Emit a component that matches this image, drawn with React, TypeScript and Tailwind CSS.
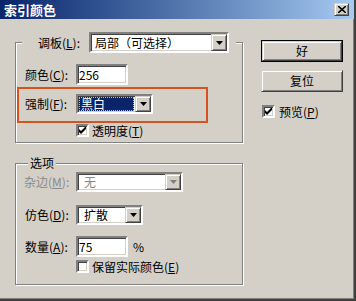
import React from "react";

const FONT = { fontFamily: '"Noto Sans CJK SC", "Noto Sans", sans-serif' };

const sunken =
  "border-2 border-t-[#808080] border-l-[#808080] border-b-white border-r-white shadow-[inset_1px_1px_0_#404040,inset_-1px_-1px_0_#d4d0c8]";
const raised =
  "border border-t-[#d4d0c8] border-l-[#d4d0c8] border-b-[#404040] border-r-[#404040] shadow-[inset_1px_1px_0_#fff,inset_-1px_-1px_0_#808080]";

function Key({ label, k, disabled }: { label: string; k: string; disabled?: boolean }) {
  return (
    <span className={disabled ? "text-[#8a8a8a]" : "text-black"}>
      {label}(<span className="underline underline-offset-1">{k}</span>):
    </span>
  );
}

function Arrow({ disabled }: { disabled?: boolean }) {
  return (
    <div className={`${raised} bg-[#d4d0c8] w-[16px] h-full flex items-center justify-center shrink-0`}>
      <svg width="7" height="4" viewBox="0 0 7 4">
        <path d="M0 0 H7 L3.5 4 Z" fill={disabled ? "#808080" : "#000"} />
      </svg>
    </div>
  );
}

function Select({
  text,
  w,
  h = 20,
  disabled,
  selected,
  pl = "pl-[4px]",
}: {
  text: string;
  w: string;
  h?: number;
  disabled?: boolean;
  selected?: boolean;
  pl?: string;
}) {
  return (
    <div className={`${sunken} ${w} bg-white flex`} style={{ height: h }}>
      {selected ? (
        <div className="flex-1 p-[1px]">
          <div className="h-full bg-[#0a246a] outline-1 outline-dotted outline-[#c9c08a] -outline-offset-1 flex items-center pl-[2px] text-white leading-none">
            {text}
          </div>
        </div>
      ) : (
        <div className={`flex-1 flex items-center ${pl} leading-none ${disabled ? "text-[#8a8a8a]" : "text-black"}`}>
          {text}
        </div>
      )}
      <Arrow disabled={disabled} />
    </div>
  );
}

function Input({ value, w }: { value: string; w: string }) {
  return (
    <div className={`${sunken} ${w} h-[21px] bg-white flex items-center pl-[1px] leading-none`}>{value}</div>
  );
}

function Check({ checked }: { checked?: boolean }) {
  return (
    <div className={`${sunken} w-[13px] h-[13px] bg-white flex items-center justify-center shrink-0`}>
      {checked && (
        <svg width="7" height="7" viewBox="0 0 7 7">
          <path d="M0 2 L2 4 L7 -1 V2 L2 7 L0 5 Z" fill="#000" />
        </svg>
      )}
    </div>
  );
}

function Button({ label, isDefault }: { label: string; isDefault?: boolean }) {
  return (
    <div className={`h-[22px] w-[82px] ${isDefault ? "border border-black" : ""}`}>
      <div className={`${raised} bg-[#d4d0c8] h-full flex items-center justify-center leading-none`}>{label}</div>
    </div>
  );
}

export default function App() {
  return (
    <div
      className="w-[356px] h-[301px] bg-[#d4d0c8] text-[12px] flex flex-col border-r-2 border-b-2 border-r-[#404040] border-b-[#404040] shadow-[inset_-1px_-1px_0_#808080] overflow-hidden"
      style={FONT}
    >
      <div className="h-[19px] shrink-0 bg-gradient-to-r from-[#0a246a] to-[#a6caf0] flex items-center justify-between pl-[4px] pr-[5px]">
        <span className="text-white font-bold text-[13px] leading-none">索引颜色</span>
        <div className={`${raised} bg-[#d4d0c8] w-[15px] h-[13px] flex items-center justify-center`}>
          <svg width="8" height="7" viewBox="0 0 8 7">
            <path d="M0 0 L8 7 M8 0 L0 7" stroke="#000" strokeWidth="1.6" />
          </svg>
        </div>
      </div>

      <div className="flex pt-[13px] pl-[15px]">
        <div className="w-[228px] flex flex-col">
          <fieldset className="border border-[#808080] shadow-[1px_1px_0_#fff,inset_1px_1px_0_#fff] pb-[5px]">
            <legend className="ml-[6px] bg-[#d4d0c8] pl-[16px] pr-[7px]">
              <div className="flex items-center h-[21px]">
                <span className="w-[51px]">
                  <Key label="调板" k="L" />
                </span>
                <div className={`${sunken} w-[140px] h-[21px] bg-white flex`}>
                  <div className="flex-1 flex items-center pl-[4px] leading-none">局部（可选择）</div>
                  <Arrow />
                </div>
              </div>
            </legend>

            <div className="flex items-center mt-[11px] pl-[9px]">
              <span className="w-[51px]">
                <Key label="颜色" k="C" />
              </span>
              <Input value="256" w="w-[52px]" />
            </div>

            <div className="ml-[1px] mt-[2px] w-[191px] h-[36px] border-2 border-[#d5531f] pt-[5px] pl-[6px] flex items-start">
              <span className="w-[51px] h-[20px] flex items-center">
                <Key label="强制" k="F" />
              </span>
              <Select text="黑白" w="w-[77px]" selected />
            </div>

            <div className="flex items-center h-[13px] leading-none mt-[1px] pl-[60px]">
              <Check checked />
              <span className="ml-[3px]">
                透明度(<span className="underline underline-offset-1">T</span>)
              </span>
            </div>
          </fieldset>

          <fieldset className="mt-[12px] border border-[#808080] shadow-[1px_1px_0_#fff,inset_1px_1px_0_#fff] pb-[11px]">
            <legend className="ml-[12px] bg-[#d4d0c8] px-[2px] h-[16px] leading-[16px]">选项</legend>

            <div className="flex items-center mt-[1px] pl-[8px]">
              <span className="w-[52px]">
                <Key label="杂边" k="M" disabled />
              </span>
              <Select text="无" w="w-[107px]" disabled pl="pl-[6px]" />
            </div>

            <div className="flex items-center mt-[13px] pl-[9px]">
              <span className="w-[51px]">
                <Key label="仿色" k="D" />
              </span>
              <Select text="扩散" w="w-[67px]" pl="pl-[6px]" />
            </div>

            <div className="flex items-center mt-[11px] pl-[9px]">
              <span className="w-[51px]">
                <Key label="数量" k="A" />
              </span>
              <Input value="75" w="w-[52px]" />
              <span className="ml-[5px]">%</span>
            </div>

            <div className="flex items-center h-[13px] leading-none mt-[3px] pl-[60px]">
              <Check />
              <span className="ml-[3px]">
                保留实际颜色(<span className="underline underline-offset-1">E</span>)
              </span>
            </div>
          </fieldset>
        </div>

        <div className="ml-[18px] flex flex-col">
          <div className="mt-[8px]">
            <Button label="好" isDefault />
          </div>
          <div className="mt-[8px]">
            <Button label="复位" />
          </div>
          <div className="mt-[13px] ml-[1px] h-[13px] leading-none flex items-center">
            <Check checked />
            <span className="ml-[4px]">
              预览(<span className="underline underline-offset-1">P</span>)
            </span>
          </div>
        </div>
      </div>
    </div>
  );
}
